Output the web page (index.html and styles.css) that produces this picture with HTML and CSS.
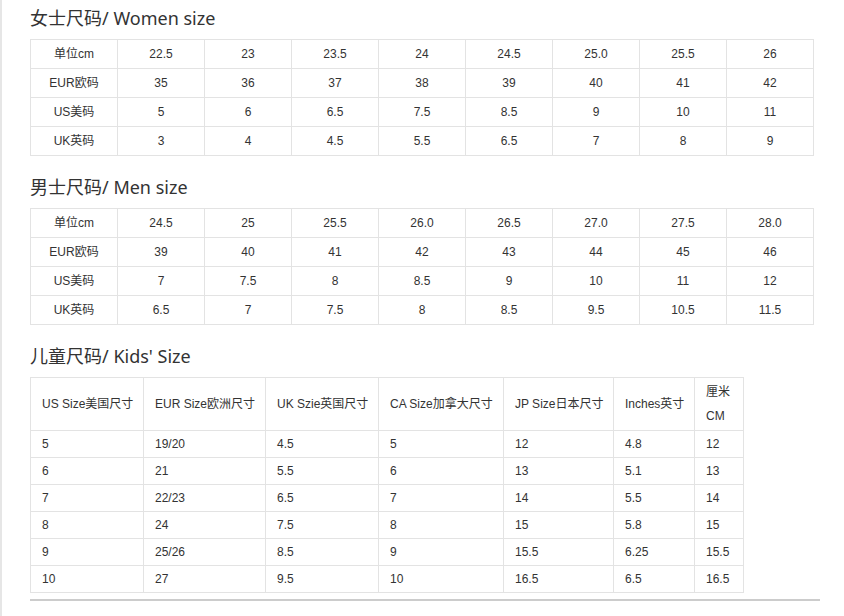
FILE: index.html
```html
<!DOCTYPE html>
<html lang="zh">
<head>
<meta charset="utf-8">
<title>尺码表</title>
<link rel="stylesheet" href="styles.css">
</head>
<body>
<div class="page">
  <section class="section">
    <h3 class="title">女士尺码/ Women size</h3>
    <table class="grid">
      <tr><td>单位cm</td><td>22.5</td><td>23</td><td>23.5</td><td>24</td><td>24.5</td><td>25.0</td><td>25.5</td><td>26</td></tr>
      <tr><td>EUR欧码</td><td>35</td><td>36</td><td>37</td><td>38</td><td>39</td><td>40</td><td>41</td><td>42</td></tr>
      <tr><td>US美码</td><td>5</td><td>6</td><td>6.5</td><td>7.5</td><td>8.5</td><td>9</td><td>10</td><td>11</td></tr>
      <tr><td>UK英码</td><td>3</td><td>4</td><td>4.5</td><td>5.5</td><td>6.5</td><td>7</td><td>8</td><td>9</td></tr>
    </table>
  </section>
  <section class="section">
    <h3 class="title">男士尺码/ Men size</h3>
    <table class="grid">
      <tr><td>单位cm</td><td>24.5</td><td>25</td><td>25.5</td><td>26.0</td><td>26.5</td><td>27.0</td><td>27.5</td><td>28.0</td></tr>
      <tr><td>EUR欧码</td><td>39</td><td>40</td><td>41</td><td>42</td><td>43</td><td>44</td><td>45</td><td>46</td></tr>
      <tr><td>US美码</td><td>7</td><td>7.5</td><td>8</td><td>8.5</td><td>9</td><td>10</td><td>11</td><td>12</td></tr>
      <tr><td>UK英码</td><td>6.5</td><td>7</td><td>7.5</td><td>8</td><td>8.5</td><td>9.5</td><td>10.5</td><td>11.5</td></tr>
    </table>
  </section>
  <section class="section">
    <h3 class="title">儿童尺码/ Kids' Size</h3>
    <table class="kids">
      <colgroup>
        <col class="c1"><col class="c2"><col class="c3"><col class="c4"><col class="c5"><col class="c6"><col class="c7">
      </colgroup>
      <tr class="head"><td>US Size美国尺寸</td><td>EUR Size欧洲尺寸</td><td>UK Szie英国尺寸</td><td>CA Size加拿大尺寸</td><td>JP Size日本尺寸</td><td>Inches英寸</td><td>厘米<br>CM</td></tr>
      <tr><td>5</td><td>19/20</td><td>4.5</td><td>5</td><td>12</td><td>4.8</td><td>12</td></tr>
      <tr><td>6</td><td>21</td><td>5.5</td><td>6</td><td>13</td><td>5.1</td><td>13</td></tr>
      <tr><td>7</td><td>22/23</td><td>6.5</td><td>7</td><td>14</td><td>5.5</td><td>14</td></tr>
      <tr><td>8</td><td>24</td><td>7.5</td><td>8</td><td>15</td><td>5.8</td><td>15</td></tr>
      <tr><td>9</td><td>25/26</td><td>8.5</td><td>9</td><td>15.5</td><td>6.25</td><td>15.5</td></tr>
      <tr><td>10</td><td>27</td><td>9.5</td><td>10</td><td>16.5</td><td>6.5</td><td>16.5</td></tr>
    </table>
    <div class="rule"></div>
  </section>
</div>
</body>
</html>
```

FILE: styles.css
```css
html, body {
  margin: 0;
  padding: 0;
  background: #fff;
}
body {
  font-family: "Liberation Sans", "Noto Sans CJK SC", sans-serif;
  color: #333;
  font-size: 12px;
}
.page {
  min-height: 616px;
  border-left: 2px solid #e6e6e6;
  padding-left: 28px;
  box-sizing: border-box;
}
.section {
  padding-top: 6px;
}
.section + .section {
  padding-top: 19px;
}
.title {
  margin: 0 0 9px 0;
  font-family: "Noto Sans", "Noto Sans CJK SC", sans-serif;
  font-weight: normal;
  font-size: 18px;
  line-height: 24px;
  color: #333;
}
.grid {
  border-collapse: collapse;
  table-layout: fixed;
  width: 784px;
}
.grid td {
  border: 1px solid #e3e3e3;
  text-align: center;
  padding: 2px 0;
  line-height: 24px;
  height: 24px;
  white-space: nowrap;
}
.kids {
  border-collapse: collapse;
  table-layout: fixed;
  width: 713px;
}
.kids td {
  border: 1px solid #e3e3e3;
  text-align: left;
  padding: 1px 0 1px 11px;
  line-height: 24px;
  vertical-align: middle;
  white-space: nowrap;
}
.kids .head td {
  padding-top: 2px;
  padding-bottom: 2px;
}
.c1 { width: 113px; }
.c2 { width: 122px; }
.c3 { width: 113px; }
.c4 { width: 125px; }
.c5 { width: 110px; }
.c6 { width: 81px; }
.c7 { width: 49px; }
.rule {
  margin-top: 6px;
  width: 790px;
  height: 2px;
  background: #cccccc;
}
```
